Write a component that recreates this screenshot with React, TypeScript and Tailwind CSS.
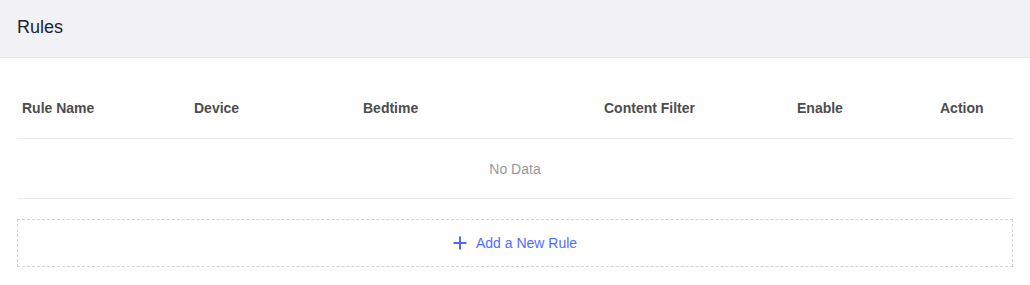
const columns = ['Rule Name', 'Device', 'Bedtime', 'Content Filter', 'Enable', 'Action'];

export default function App() {
  return (
    <div className="w-[1030px] h-[285px] bg-white font-['Liberation_Sans',Arial,sans-serif]">
      <header className="h-[58px] bg-[#f2f2f6] border-b border-[#e6e6ea] flex items-center px-[17px] pb-[2px]">
        <h1 className="text-[18px] text-[#1b2236]">Rules</h1>
      </header>

      <div className="px-[17px] pt-[20px]">
        <div className="grid grid-cols-[172px_169px_241px_193px_143px_1fr] h-[61px] items-center border-b border-[#ebebeb]">
          {columns.map((c) => (
            <div key={c} className="px-[5px] text-[14px] font-bold text-[#4d4d4d]">
              {c}
            </div>
          ))}
        </div>
        <div className="h-[60px] flex items-center justify-center pt-[2px] border-b border-[#ebebeb] text-[14px] text-[#999999]">
          No Data
        </div>

        <button className="mt-[20px] w-full h-[48px] border border-dashed border-[#d4d4d4] flex items-center justify-center gap-[9px] text-[14px] text-[#4f6ef7]">
          <svg width="14" height="14" viewBox="0 0 14 14" className="text-[#5067f5]">
            <path d="M7 0.5v13M0.5 7h13" stroke="currentColor" strokeWidth="2" />
          </svg>
          <span>Add a New Rule</span>
        </button>
      </div>
    </div>
  );
}
